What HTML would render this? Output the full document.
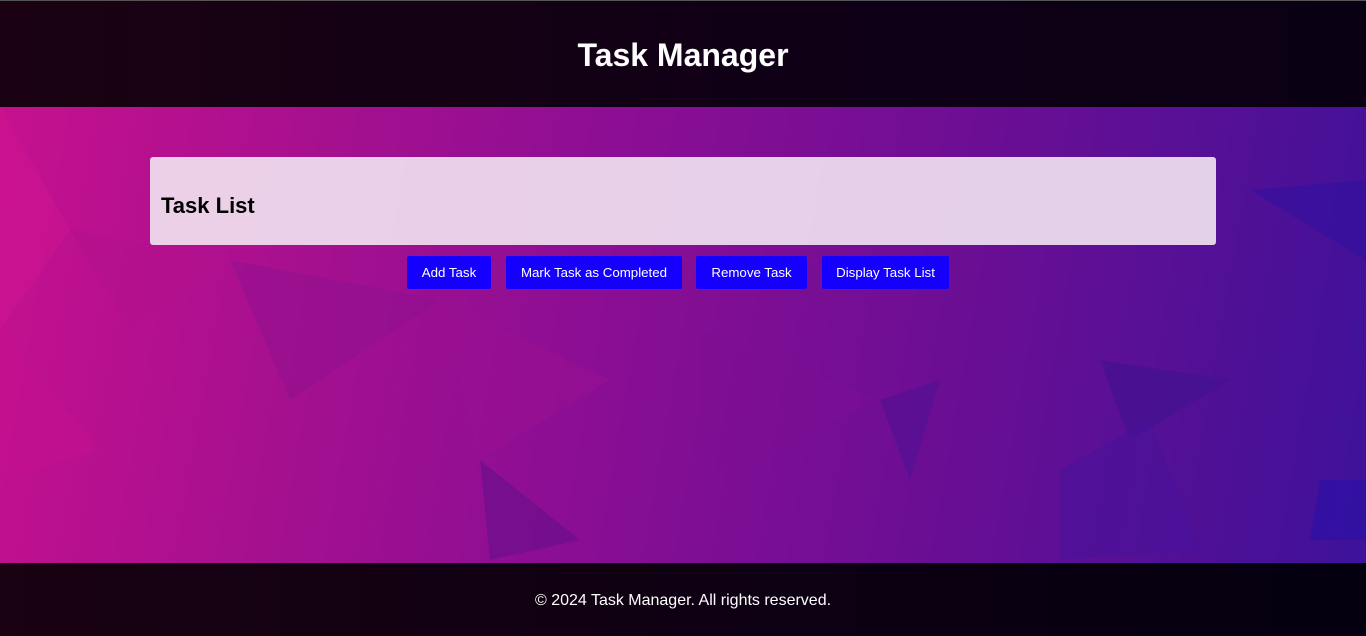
<!DOCTYPE html>
<html><head><meta charset="utf-8"><style>
*{margin:0;padding:0;box-sizing:border-box}
html,body{width:1366px;height:636px;overflow:hidden}
body{font-family:"Liberation Sans",sans-serif;position:relative;background:linear-gradient(100deg,#c8118f 0%,#a4108f 25%,#8a0e94 45%,#700e94 65%,#531096 85%,#3c129a 100%)}
#bg{position:absolute;left:0;top:0}
header{position:absolute;top:0;left:0;width:1366px;height:107px;background:linear-gradient(90deg,#1a0212,#0f0016 60%,#0a0014);border-top:1px solid #555;display:flex;align-items:center;justify-content:center}
header h1{color:#fff;font-size:32px;font-weight:bold;margin-top:3px}
.card{position:absolute;left:150px;top:157px;width:1066px;height:88px;background:rgba(240,225,240,.92);border-radius:3px}
.card h2{position:absolute;left:11px;top:36px;font-size:22px;font-weight:bold;color:#000}
.btns{position:absolute;top:256px;left:0;width:1366px}
.btns button{position:absolute;height:33px;background:#1500ff;color:#fff;border:none;border-radius:2px;font-family:"Liberation Sans",sans-serif;font-size:13.3px}
footer{position:absolute;top:563px;left:0;width:1366px;height:73px;background:linear-gradient(90deg,#190212,#0c0012 60%,#040010);color:#fff;font-size:16px;text-align:center;line-height:75px}
</style></head><body>
<svg id="bg" width="1366" height="636">
<polygon points="0,107 70,230 0,330" fill="#d0148f" opacity=".5"/>
<polygon points="70,230 230,260 130,330" fill="#b20f8c" opacity=".5"/>
<polygon points="0,330 100,450 0,480" fill="#c40f90" opacity=".5"/>
<polygon points="230,260 440,300 290,400" fill="#8e0f90" opacity=".5"/>
<polygon points="440,300 610,380 480,460" fill="#9a1092" opacity=".5"/>
<polygon points="480,460 580,540 490,560" fill="#5d0d8a" opacity=".5"/>
<polygon points="700,330 880,400 700,480" fill="#7c0e92" opacity=".4"/>
<polygon points="880,400 940,380 910,480" fill="#4a0f90" opacity=".5"/>
<polygon points="1100,360 1230,380 1130,440" fill="#3b128e" opacity=".5"/>
<polygon points="1060,470 1150,420 1200,550 1060,560" fill="#45129a" opacity=".5"/>
<polygon points="1250,190 1366,180 1366,260" fill="#2c10a0" opacity=".5"/>
<polygon points="1320,480 1366,480 1366,540 1310,540" fill="#2a10a6" opacity=".6"/>
</svg>
<header><h1>Task Manager</h1></header>
<div class="card"><h2>Task List</h2></div>
<div class="btns">
<button style="left:407px;width:84px">Add Task</button>
<button style="left:506px;width:176px">Mark Task as Completed</button>
<button style="left:696px;width:111px">Remove Task</button>
<button style="left:822px;width:127px">Display Task List</button>
</div>
<footer>© 2024 Task Manager. All rights reserved.</footer>
</body></html>
